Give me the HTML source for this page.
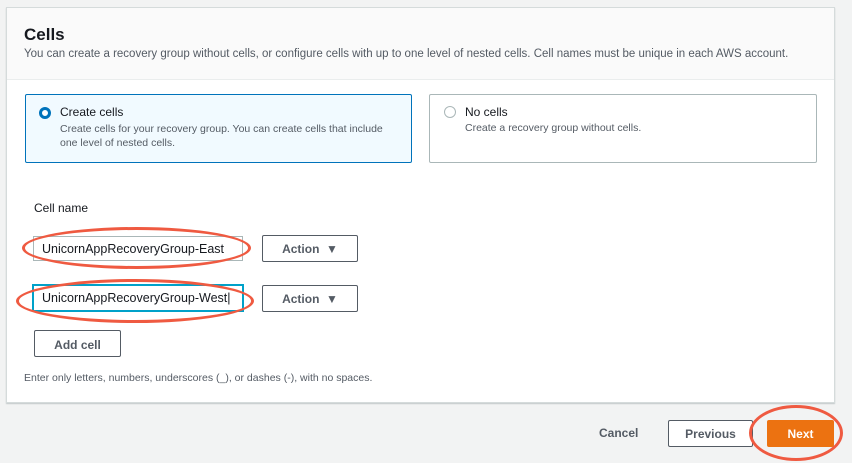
<!DOCTYPE html>
<html><head><style>
body{margin:0;width:852px;height:463px;background:#f2f3f3;font-family:"Liberation Sans",Arial,sans-serif;position:relative;overflow:hidden;color:#16191f}
.abs{position:absolute}
.panel{left:6px;top:7px;width:827px;height:394px;background:#fff;border:1px solid #d5dbdb;box-shadow:0 1px 1px rgba(0,28,36,.2)}
.hdr{left:7px;top:8px;width:827px;height:71px;background:#fafafa;border-bottom:1px solid #eaeded}
.card{border:1px solid #aab7b8;border-radius:2px;height:67px}
.btn{border:1px solid #545b64;background:#fff;font-weight:bold;font-size:12px;color:#545b64;text-align:center;box-sizing:border-box;border-radius:2px}
.inp{border:1px solid #aab7b8;font-size:12.5px;box-sizing:border-box;padding:5px 0 0 8px;background:#fff}
.ell{border:3.5px solid #ef5a41;border-radius:50%;box-sizing:border-box}
</style></head><body>
<div class="abs panel"></div>
<div class="abs hdr"></div>
<div class="abs" style="left:24px;top:25px;font-size:17px;font-weight:bold">Cells</div>
<div class="abs" style="left:24px;top:48px;font-size:11.5px;color:#545b64">You can create a recovery group without cells, or configure cells with up to one level of nested cells. Cell names must be unique in each AWS account.</div>

<div class="abs card" style="left:25px;top:94px;width:385px;background:#f1faff;border-color:#0073bb"></div>
<div class="abs" style="left:39px;top:107px;width:6px;height:6px;border:3.5px solid #0073bb;border-radius:50%;background:#fff"></div>
<div class="abs" style="left:60px;top:105px;font-size:12px">Create cells</div>
<div class="abs" style="left:60px;top:122px;font-size:10.5px;color:#545b64;line-height:14px;width:338px">Create cells for your recovery group. You can create cells that include one level of nested cells.</div>

<div class="abs card" style="left:429px;top:94px;width:386px"></div>
<div class="abs" style="left:444px;top:106px;width:10px;height:10px;border:1px solid #aab7b8;border-radius:50%"></div>
<div class="abs" style="left:465px;top:105px;font-size:12px">No cells</div>
<div class="abs" style="left:465px;top:122px;font-size:10.5px;color:#545b64">Create a recovery group without cells.</div>

<div class="abs" style="left:34px;top:201px;font-size:12px">Cell name</div>
<div class="abs inp" style="left:33px;top:236px;width:210px;height:25px">UnicornAppRecoveryGroup-East</div>
<div class="abs inp" style="left:33px;top:285px;width:210px;height:26px;border:1px solid #00a1c9;box-shadow:0 0 0 1px #00a1c9">UnicornAppRecoveryGroup-West|</div>
<div class="abs btn" style="left:262px;top:235px;width:96px;height:27px;padding-top:6px">Action &nbsp;▼</div>
<div class="abs btn" style="left:262px;top:285px;width:96px;height:27px;padding-top:6px">Action &nbsp;▼</div>
<div class="abs btn" style="left:34px;top:330px;width:87px;height:27px;padding-top:7px">Add cell</div>
<div class="abs" style="left:24px;top:372px;font-size:10.5px;color:#545b64">Enter only letters, numbers, underscores (_), or dashes (-), with no spaces.</div>

<div class="abs" style="left:599px;top:426px;font-size:12px;font-weight:bold;color:#545b64">Cancel</div>
<div class="abs btn" style="left:668px;top:420px;width:85px;height:27px;padding-top:6px">Previous</div>
<div class="abs btn" style="left:767px;top:420px;width:67px;height:27px;padding-top:6px;background:#ec7211;border-color:#ec7211;color:#fff">Next</div>

<div class="abs ell" style="left:22px;top:227px;width:229px;height:42px"></div>
<div class="abs ell" style="left:16px;top:279px;width:238px;height:44px"></div>
<div class="abs ell" style="left:749px;top:405px;width:94px;height:56px"></div>
</body></html>
